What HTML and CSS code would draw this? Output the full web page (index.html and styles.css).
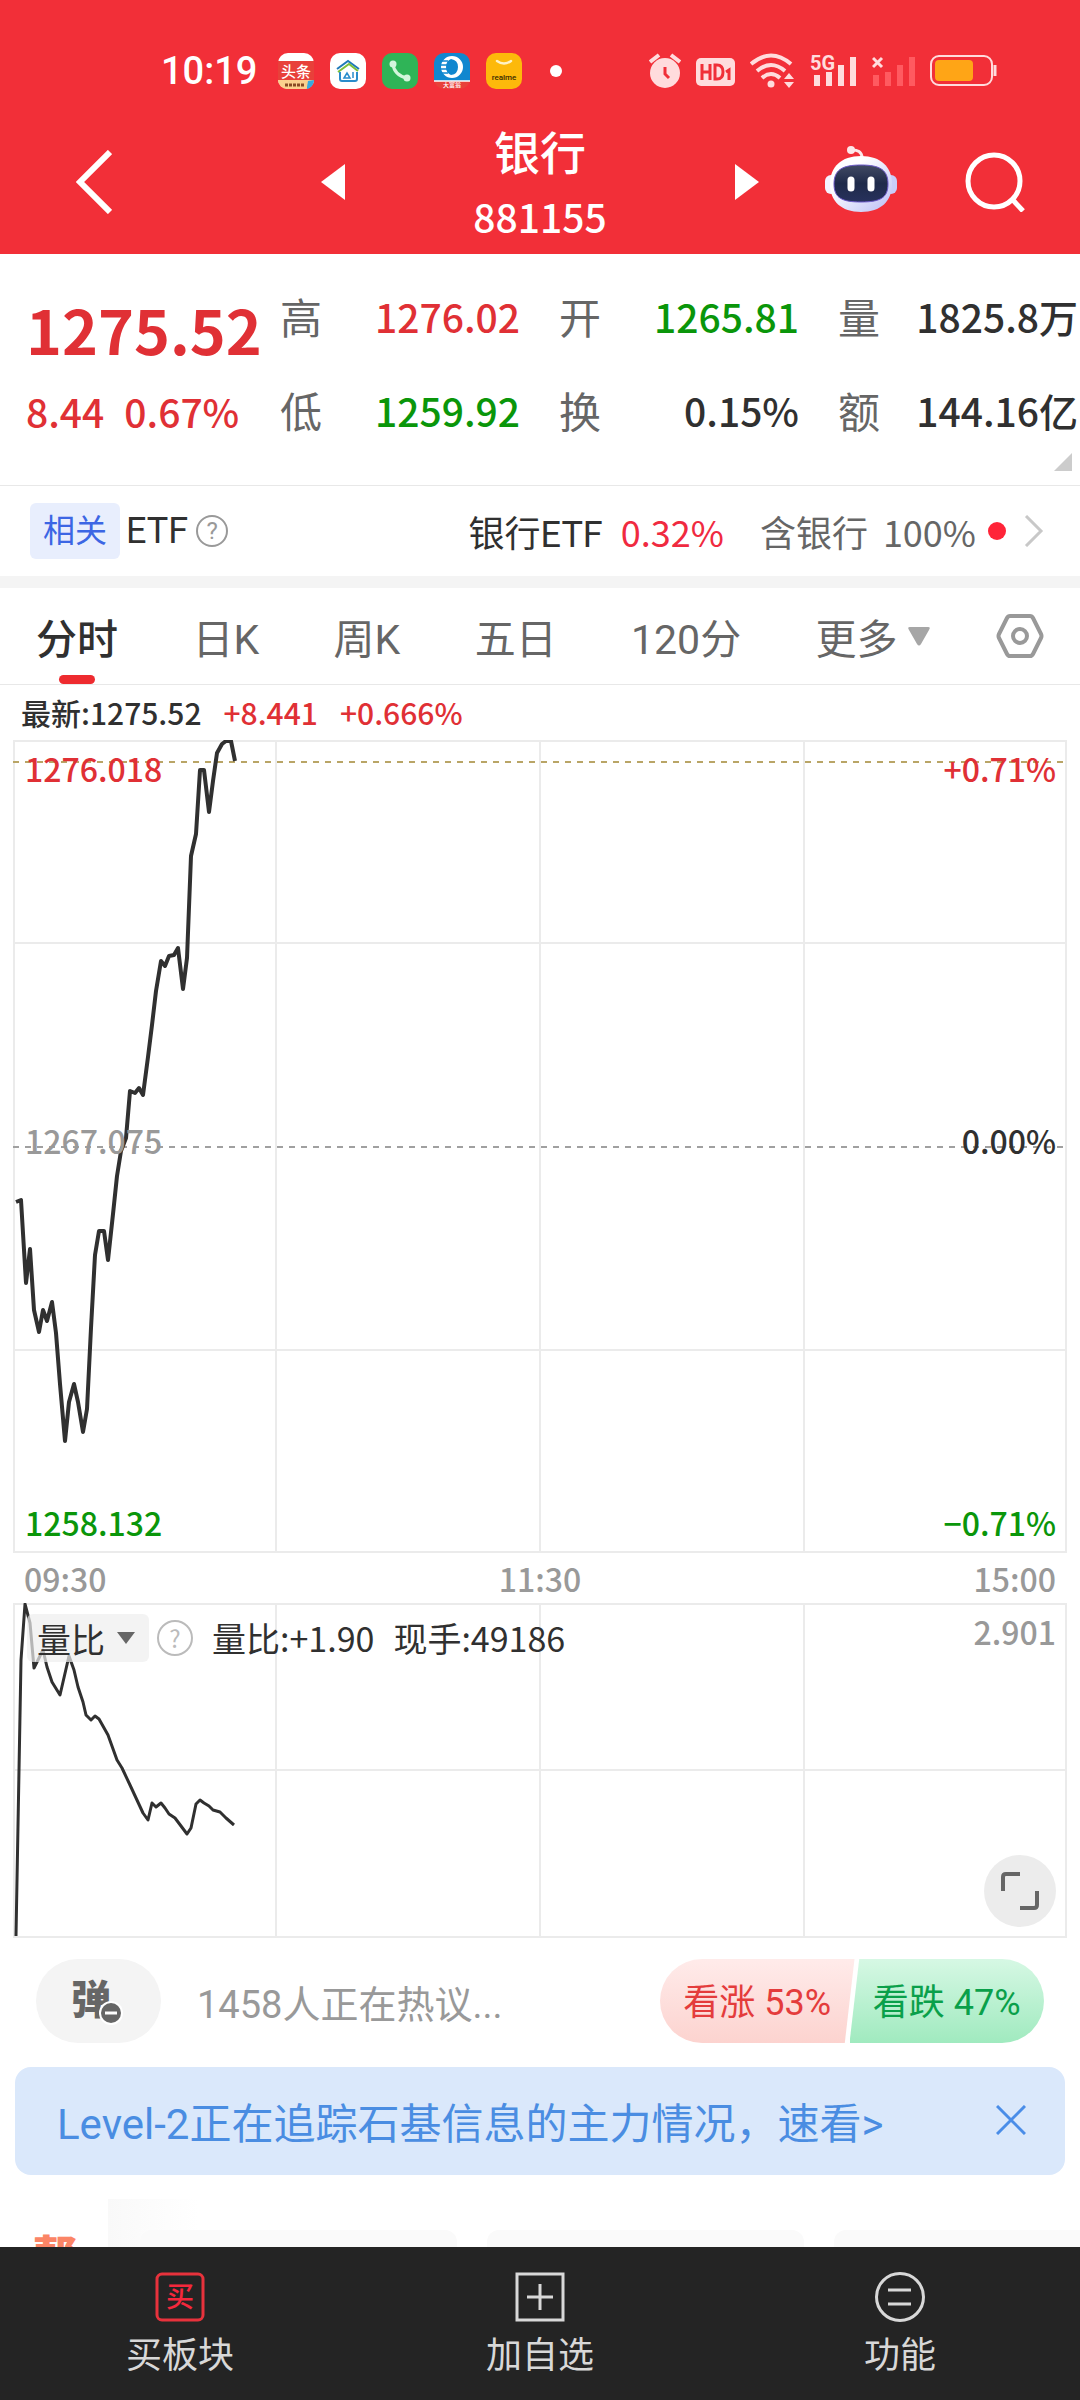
FILE: index.html
```html
<!DOCTYPE html>
<html lang="zh-CN">
<head>
    <meta charset="UTF-8">
    <meta name="viewport" content="width=device-width, initial-scale=1.0">
    <title>银行 881155</title>
    <link rel="stylesheet" href="styles.css">
</head>
<body>

<header class="header">
    <!-- Статус-бар -->
    <div class="status-bar">
        <div class="status-left">
            <span class="clock">10:19</span>
            <svg class="app-icon" viewBox="0 0 36 36">
                <rect width="36" height="36" rx="10" fill="#fff"/>
                <path d="M0 8h36v19H0z" fill="#e8403a"/>
                <path d="M0 27h36a9 9 0 0 1-9 9H9a9 9 0 0 1-9-9z" fill="#fbd08d"/>
                <path d="M29 34l1-6 6-1a9 9 0 0 1-7 9z" fill="#38a9e0"/>
                <text x="18" y="24" class="icon-text" font-size="15" fill="#fff">头条</text>
                <path d="M7 32h20" stroke="#8a4a24" stroke-width="3" stroke-dasharray="3 1"/>
            </svg>
            <svg class="app-icon" viewBox="0 0 36 36">
                <rect width="36" height="36" rx="10" fill="#fff"/>
                <path d="M7 16L18 8l11 8" fill="none" stroke="#1f79b8" stroke-width="2"/>
                <path d="M8 19l11-8 9 7" fill="none" stroke="#7cbf3a" stroke-width="2"/>
                <path d="M10 19v7q0 2 2 2h13q2 0 2-2v-7" fill="none" stroke="#2a8ccb" stroke-width="2"/>
                <path d="M14 25l3-5 3 5zM23 19v6" fill="none" stroke="#2a8ccb" stroke-width="1.5"/>
            </svg>
            <svg class="app-icon" viewBox="0 0 36 36">
                <rect width="36" height="36" rx="10" fill="#2fb457"/>
                <path d="M11 11q1 11 14 14" fill="none" stroke="#d3f5dc" stroke-width="3"/>
                <circle cx="11" cy="11" r="3.5" fill="#d3f5dc"/>
                <circle cx="25" cy="25" r="3.5" fill="#d3f5dc"/>
            </svg>
            <svg class="app-icon" viewBox="0 0 36 36">
                <rect width="36" height="36" rx="10" fill="#e8403a"/>
                <path d="M0 28V10A10 10 0 0 1 10 0h16a10 10 0 0 1 10 10v18z" fill="#1087cf"/>
                <path d="M0 28h36" stroke="#fff" stroke-width="1.5"/>
                <path fill-rule="evenodd" d="M18 3a11 11 0 1 1 0 22a11 11 0 1 1 0-22zM17 6q-5 2-5 8t5 8q7-1 7-8t-7-8z" fill="#fff"/>
                <path d="M4 8h10M4 12h9M4 16h9M4 20h10" stroke="#1087cf" stroke-width="1.5"/>
                <text x="18" y="34" class="icon-text" font-size="6" fill="#fff">大富翁</text>
            </svg>
            <svg class="app-icon" viewBox="0 0 36 36">
                <rect width="36" height="36" rx="10" fill="#fdb90b"/>
                <path d="M11 8q7 5 14 0" fill="none" stroke="#fff2c4" stroke-width="2.5" stroke-linecap="round"/>
                <text x="18" y="27" class="icon-text" font-size="8" fill="#3a2c00">realme</text>
            </svg>
            <span class="more-dot"></span>
        </div>
        <div class="status-right">
            <svg width="32" height="36" viewBox="0 0 32 36">
                <circle cx="16" cy="20" r="15" fill="#ffdcdd"/>
                <path d="M1 9l9-7M31 9l-9-7" stroke="#ffdcdd" stroke-width="4"/>
                <path d="M16 14v7l4 4" fill="none" stroke="#f02f38" stroke-width="3"/>
            </svg>
            <svg width="39" height="36" viewBox="0 0 39 36">
                <rect y="5" width="39" height="28" rx="5" fill="#ffdcdd"/>
                <path d="M6 11v16M14 11v16M6 19h8M19 12v14h2q6 0 6-7t-6-7zM30 19l3-2v10" fill="none" stroke="#f02f38" stroke-width="3"/>
            </svg>
            <svg width="45" height="36" viewBox="0 0 45 36">
                <path d="M1 11q20-17 40 0M7 18q14-12 28 0M12 25q9-8 18 0" fill="none" stroke="#ffdcdd" stroke-width="4"/>
                <circle cx="21" cy="31" r="3.5" fill="#ffdcdd"/>
                <path d="M34 26l5-6 5 6zM34 29l5 6 5-6z" fill="#ffdcdd"/>
            </svg>
            <svg class="signal" width="47" height="36" viewBox="0 0 47 36">
                <text x="0" y="17" font-size="20" font-weight="700" fill="#ffdcdd">5G</text>
                <path d="M7 22v11M19 19v14M31 12v21M43 4v29" stroke="#ffdcdd" stroke-width="6"/>
            </svg>
            <svg width="43" height="36" viewBox="0 0 43 36">
                <path d="M1 5l9 9M10 5l-9 9" stroke="#ffdcdd" stroke-width="3"/>
                <path d="M4 22v11M16 19v14M28 12v21M40 4v29" stroke="#ff5a60" stroke-width="6"/>
            </svg>
            <svg width="67" height="36" viewBox="0 0 67 36">
                <rect x="1" y="3" width="61" height="29" rx="8" fill="none" stroke="#ffdcdd" stroke-width="2"/>
                <rect x="5" y="7" width="38" height="21" rx="4" fill="#ffa516"/>
                <path d="M65 12v11" stroke="#ffdcdd" stroke-width="3"/>
            </svg>
        </div>
    </div>

    <!-- Заголовок -->
    <div class="title-bar">
        <button class="icon-btn back" aria-label="返回">
            <svg width="36" height="64" viewBox="0 0 36 64"><path d="M34 2L4 32l30 30" fill="none" stroke="#fff" stroke-width="6"/></svg>
        </button>
        <div class="title-switch">
            <button class="icon-btn" aria-label="上一个">
                <svg width="24" height="36" viewBox="0 0 24 36"><path d="M24 0v36L0 18z" fill="#fff"/></svg>
            </button>
            <div class="title-text">
                <h1>银行</h1>
                <p>881155</p>
            </div>
            <button class="icon-btn" aria-label="下一个">
                <svg width="24" height="36" viewBox="0 0 24 36"><path d="M0 0v36l24-18z" fill="#fff"/></svg>
            </button>
        </div>
        <div class="title-actions">
            <button class="icon-btn" aria-label="助手">
                <svg width="72" height="72" viewBox="0 0 72 72">
                    <defs>
                        <linearGradient id="shell" x1="0" y1="0" x2="1" y2="1">
                            <stop offset="0.3" stop-color="#fff"/>
                            <stop offset="1" stop-color="#b9bdf5"/>
                        </linearGradient>
                        <linearGradient id="visor" x1="0" y1="0" x2="0" y2="1">
                            <stop offset="0" stop-color="#414a63"/>
                            <stop offset="0.5" stop-color="#1f2a4a"/>
                            <stop offset="1" stop-color="#27315c"/>
                        </linearGradient>
                    </defs>
                    <path d="M25 4q12-1 12 8" fill="none" stroke="#fde8ea" stroke-width="3"/>
                    <circle cx="26" cy="4" r="4" fill="#fde8ea"/>
                    <rect x="0" y="29" width="12" height="19" rx="6" fill="#f4f3ff"/>
                    <rect x="60" y="29" width="12" height="19" rx="6" fill="#c9cdfa"/>
                    <path d="M36 10c20 0 31 11 31 28S56 66 36 66 5 55 5 38s11-28 31-28z" fill="url(#shell)"/>
                    <path d="M36 19c19 0 27 5 27 19s-8 18-27 18S9 52 9 38s8-19 27-19z" fill="url(#visor)" stroke="#6b58c8" stroke-width="1"/>
                    <path d="M26 34v8M46 34v8" stroke="#fff" stroke-width="7" stroke-linecap="round"/>
                </svg>
            </button>
            <button class="icon-btn" aria-label="搜索">
                <svg width="60" height="60" viewBox="0 0 60 60">
                    <circle cx="29" cy="29" r="26" fill="none" stroke="#fff" stroke-width="5"/>
                    <path d="M47 47l11 12" stroke="#fff" stroke-width="5"/>
                </svg>
            </button>
        </div>
    </div>
</header>

<main class="content">
    <!-- Котировка -->
    <section class="quote">
        <div class="quote-main up">
            <div class="price">1275.52</div>
            <div class="change"><span>8.44</span><span>0.67%</span></div>
        </div>
        <div class="quote-stats">
            <div class="stat"><span class="label">高</span><span class="up">1276.02</span></div>
            <div class="stat"><span class="label">开</span><span class="down">1265.81</span></div>
            <div class="stat"><span class="label">量</span><span>1825.8万</span></div>
            <div class="stat"><span class="label">低</span><span class="down">1259.92</span></div>
            <div class="stat"><span class="label">换</span><span>0.15%</span></div>
            <div class="stat"><span class="label">额</span><span>144.16亿</span></div>
        </div>
        <span class="quote-more"></span>
    </section>

    <!-- ETF -->
    <section class="etf">
        <span class="tag">相关</span>
        <span>ETF</span>
        <span class="help">?</span>
        <a href="#" class="etf-link">
            <span>银行ETF</span>
            <span class="etf-rate">0.32%</span>
            <span class="etf-part">含银行</span>
            <span class="etf-share">100%</span>
            <span class="etf-dot"></span>
            <svg width="20" height="32" viewBox="0 0 20 32"><path d="M2 1l15 15L2 31" fill="none" stroke="#c8c8c8" stroke-width="3"/></svg>
        </a>
    </section>

    <!-- Вкладки -->
    <nav class="tabs">
        <button class="tab active">分时</button>
        <button class="tab">日K</button>
        <button class="tab">周K</button>
        <button class="tab">五日</button>
        <button class="tab">120分</button>
        <button class="tab">更多<svg width="22" height="19" viewBox="0 0 22 19"><path d="M2 0h18q3 0 1 3L13 17q-2 3-4 0L1 3q-2-3 1-3z" fill="#a6a6a6"/></svg></button>
        <button class="tab" aria-label="设置">
            <svg width="48" height="46" viewBox="0 0 48 46">
                <path d="M14 3h20q2 0 3 2l8 16q1 2 0 4l-8 16q-1 2-3 2H14q-2 0-3-2L3 25q-1-2 0-4l8-16q1-2 3-2z" fill="none" stroke="#999" stroke-width="4"/>
                <circle cx="24" cy="23" r="7" fill="none" stroke="#999" stroke-width="4"/>
            </svg>
        </button>
    </nav>

    <!-- Графики -->
    <section class="charts">
        <div class="latest">
            <span>最新:1275.52</span>
            <span class="up">+8.441</span>
            <span class="up">+0.666%</span>
        </div>

        <div class="chart chart-price">
            <svg class="plot" viewBox="0 0 1054 813" preserveAspectRatio="none">
                <path class="grid" d="M1 1h1052v811H1zM263 0v813M527 0v813M791 0v813M0 203h1054M0 610h1054"/>
                <path class="dash dash-now" d="M0 22h1054"/>
                <path class="dash" d="M0 407h1054"/>
                <polyline class="line" points="3,462 8,460 13,543 17,509 21,570 26,592 30,570 34,581 39,562 43,593 47,644 52,701 56,662 61,644 65,662 70,692 74,669 78,588 82,515 86,491 91,491 95,520 100,474 104,436 108,411 113,398 117,351 122,353 126,348 130,355 135,317 139,285 143,251 148,221 152,226 156,216 161,215 165,208 170,249 174,218 178,116 183,94 187,30 191,30 196,72 200,41 204,13 209,4 213,1 218,1 222,21"/>
            </svg>
            <span class="mark mark-top-left up">1276.018</span>
            <span class="mark mark-top-right up">+0.71%</span>
            <span class="mark mark-mid-left muted">1267.075</span>
            <span class="mark mark-mid-right">0.00%</span>
            <span class="mark mark-bottom-left down">1258.132</span>
            <span class="mark mark-bottom-right down">−0.71%</span>
        </div>

        <div class="time-axis"><span>09:30</span><span>11:30</span><span>15:00</span></div>

        <div class="chart chart-volume">
            <svg class="plot" viewBox="0 0 1054 335" preserveAspectRatio="none">
                <path class="grid" d="M1 1h1052v333H1zM263 0v335M527 0v335M791 0v335M0 167h1054"/>
                <polyline class="line line-thin" points="3,333 8,57 12,1 17,20 21,65 30,47 34,64 39,79 47,92 56,53 61,67 65,84 70,99 73,112 78,117 82,113 86,116 95,132 104,157 109,165 117,182 130,210 135,217 139,200 143,204 148,200 152,205 156,211 162,215 174,231 178,225 183,201 187,197 191,200 196,203 200,207 207,209 213,215 221,222"/>
            </svg>
            <div class="indicator">
                <span class="indicator-pick">
                    <select class="indicator-select" aria-label="指标"><option>量比</option></select>
                    <svg class="indicator-arrow" width="18" height="12" viewBox="0 0 18 12"><path d="M0 0h18l-9 12z" fill="#666"/></svg>
                </span>
                <span class="help help-light">?</span>
                <span class="indicator-info">量比:+1.90</span>
                <span class="indicator-info">现手:49186</span>
            </div>
            <span class="mark mark-top-right muted">2.901</span>
            <button class="expand" aria-label="全屏">
                <svg width="38" height="38" viewBox="0 0 38 38"><path d="M2 19V5q0-3 3-3h14M36 19v14q0 3-3 3H19" fill="none" stroke="#666" stroke-width="4"/></svg>
            </button>
        </div>
    </section>

    <!-- Обсуждение -->
    <section class="talk">
        <button class="danmu" aria-label="弹幕">
            <span>弹</span>
            <svg class="danmu-off" width="24" height="24" viewBox="0 0 24 24">
                <circle cx="12" cy="12" r="12" fill="#fff"/>
                <circle cx="12" cy="12" r="10" fill="#666"/>
                <path d="M6 12h12" stroke="#fff" stroke-width="3"/>
            </svg>
        </button>
        <a href="#" class="talk-link">1458人正在热议...</a>
        <div class="vote">
            <button class="vote-up">看涨 53%</button>
            <button class="vote-down">看跌 47%</button>
        </div>
    </section>

    <!-- Баннер -->
    <aside class="banner">
        <a href="#">Level-2正在追踪石基信息的主力情况，速看&gt;</a>
        <button class="icon-btn" aria-label="关闭">
            <svg width="30" height="30" viewBox="0 0 30 30"><path d="M1 1l28 28M29 1L1 29" stroke="#4a8de8" stroke-width="3"/></svg>
        </button>
    </aside>

    <section class="feed">
        <span class="feed-title">帮</span>
        <div class="feed-cards">
            <div class="feed-card"></div>
            <div class="feed-card"></div>
            <div class="feed-card"></div>
        </div>
    </section>
</main>

<!-- Нижнее меню -->
<nav class="bottom-nav">
    <a href="#">
        <svg width="50" height="50" viewBox="0 0 50 50">
            <rect x="2" y="2" width="46" height="46" rx="5" fill="none" stroke="#e8323c" stroke-width="3"/>
            <text x="25" y="35" class="icon-text" font-size="28" fill="#f5283c">买</text>
        </svg>
        <span>买板块</span>
    </a>
    <a href="#">
        <svg width="50" height="50" viewBox="0 0 50 50">
            <path d="M2 2h46v46H2zM12 25h26M25 12v26" fill="none" stroke="#d8d8d8" stroke-width="3"/>
        </svg>
        <span>加自选</span>
    </a>
    <a href="#">
        <svg width="50" height="50" viewBox="0 0 50 50">
            <circle cx="25" cy="25" r="23.5" fill="none" stroke="#d8d8d8" stroke-width="3"/>
            <path d="M13 18h23M13 32h23" stroke="#d8d8d8" stroke-width="3"/>
        </svg>
        <span>功能</span>
    </a>
</nav>

</body>
</html>
```
FILE: styles.css
```css
/* Общие стили */
* {
    margin: 0;
    padding: 0;
    box-sizing: border-box;
}

:root {
    --num: "Noto Sans CJK SC", sans-serif;
    --text: Roboto, "Noto Sans CJK SC", sans-serif;
    --up: #e03035;
    --down: #0a960a;
    --line: #e8e8e8;
}

body {
    display: flex;
    flex-direction: column;
    height: 100vh;
    font-family: var(--text);
    font-size: 36px;
    color: #303030;
    background: #fff;
    overflow: hidden;
}

a {
    color: inherit;
    text-decoration: none;
}

button,
select {
    font: inherit;
    color: inherit;
    background: none;
    border: none;
    cursor: pointer;
}

svg {
    display: block;
    flex: none;
}

.up {
    color: var(--up);
}

.down {
    color: var(--down);
}

.muted {
    color: #999;
}

.icon-text {
    text-anchor: middle;
    font-weight: 500;
}

.icon-btn {
    display: flex;
    align-items: center;
}

/* Шапка */
.header {
    flex: none;
    padding-top: 53px;
    background: #f22f38;
    color: #fff;
}

.status-bar {
    display: flex;
    justify-content: space-between;
    align-items: center;
    height: 36px;
    padding: 0 83px 0 161px;
}

.status-left {
    display: flex;
    align-items: center;
    gap: 16px;
}

.clock {
    margin-right: 5px;
    font-size: 38px;
    font-weight: 500;
}

.app-icon {
    width: 36px;
    height: 36px;
}

.more-dot {
    width: 12px;
    height: 12px;
    margin-left: 12px;
    border-radius: 50%;
    background: #fff;
}

.status-right {
    display: flex;
    gap: 15px;
}

.signal {
    overflow: visible;
}

.title-bar {
    display: grid;
    grid-template-columns: 1fr 438px 1fr;
    align-items: center;
    height: 165px;
    padding-top: 20px;
}

.back {
    padding-left: 76px;
}

.title-switch {
    display: flex;
    justify-content: space-between;
    align-items: center;
}

.title-text {
    padding-top: 8px;
    text-align: center;
}

.title-text h1 {
    font-size: 46px;
    font-weight: 500;
    line-height: 60px;
}

.title-text p {
    font-family: var(--num);
    font-size: 39px;
    font-weight: 500;
    line-height: 64px;
}

.title-actions {
    display: flex;
    justify-content: flex-end;
    align-items: center;
    gap: 68px;
    padding-right: 55px;
}

/* Котировка */
.quote {
    position: relative;
    display: flex;
    padding: 32px 2px 44px 0;
    border-bottom: 1px solid var(--line);
    font-family: var(--num);
    font-size: 39px;
    font-weight: 500;
}

.quote-main {
    flex: none;
    width: 280px;
    padding: 7px 0 0 26px;
    white-space: nowrap;
}

.price {
    font-size: 61px;
    font-weight: 700;
    line-height: 72px;
}

.change {
    display: flex;
    gap: 20px;
    margin-top: 16px;
    line-height: 60px;
}

.quote-stats {
    flex: 1;
    display: grid;
    grid-template-columns: repeat(3, 1fr);
    column-gap: 39px;
    row-gap: 33px;
}

.stat {
    display: flex;
    justify-content: space-between;
    line-height: 60px;
    white-space: nowrap;
}

.label {
    font-size: 42px;
    font-weight: 400;
    color: #666;
}

.quote-more {
    position: absolute;
    right: 8px;
    bottom: 14px;
    border-left: 18px solid transparent;
    border-bottom: 18px solid #ccc;
}

/* ETF */
.etf {
    display: flex;
    align-items: center;
    height: 102px;
    padding: 0 36px 0 30px;
    border-bottom: 12px solid #f4f4f4;
}

.tag {
    margin-right: 6px;
    padding: 0 13px;
    border-radius: 6px;
    background: #e8eefd;
    color: #3c66e4;
    font-size: 32px;
    line-height: 56px;
}

.help {
    width: 32px;
    height: 32px;
    margin-left: 8px;
    border: 2px solid #999;
    border-radius: 50%;
    color: #999;
    font-size: 24px;
    line-height: 28px;
    text-align: center;
}

.etf-link {
    display: flex;
    align-items: center;
    margin-left: auto;
}

.etf-rate {
    margin-left: 18px;
    color: #f02a40;
    font-family: var(--num);
}

.etf-part {
    margin-left: 36px;
    color: #666;
}

.etf-share {
    margin-left: 15px;
    color: #666;
    font-family: var(--num);
}

.etf-dot {
    width: 18px;
    height: 18px;
    margin: 0 18px 0 12px;
    border-radius: 50%;
    background: #ff2438;
}

/* Вкладки */
.tabs {
    display: flex;
    justify-content: space-between;
    height: 97px;
    padding: 0 36px;
    border-bottom: 1px solid var(--line);
}

.tab {
    position: relative;
    display: flex;
    align-items: center;
    gap: 10px;
    color: #666;
    font-size: 41px;
}

.tab:last-child {
    margin-left: -8px;
}

.tab.active {
    color: #303030;
    font-weight: 500;
}

.tab.active::after {
    content: "";
    position: absolute;
    bottom: 0;
    left: 50%;
    width: 36px;
    height: 9px;
    margin-left: -18px;
    border-radius: 5px;
    background: #ee2b2f;
}

/* Графики */
.charts {
    padding: 0 13px;
}

.latest {
    display: flex;
    gap: 22px;
    padding-left: 8px;
    font-family: var(--num);
    font-size: 30px;
    font-weight: 500;
    line-height: 55px;
}

.chart {
    position: relative;
}

.chart-price {
    height: 813px;
}

.chart-volume {
    height: 335px;
}

.plot {
    width: 100%;
    height: 100%;
}

.grid {
    fill: none;
    stroke: #ebebeb;
    stroke-width: 2;
}

.dash {
    stroke: #a0a0a0;
    stroke-width: 2;
    stroke-dasharray: 6 6;
}

.dash-now {
    stroke: #b9a566;
}

.line {
    fill: none;
    stroke: #303030;
    stroke-width: 4;
    stroke-linejoin: round;
}

.line-thin {
    stroke-width: 3;
}

.mark {
    position: absolute;
    font-family: var(--num);
    font-size: 32px;
    font-weight: 500;
    line-height: 32px;
}

.mark-top-left,
.mark-mid-left,
.mark-bottom-left {
    left: 12px;
}

.mark-top-right,
.mark-mid-right,
.mark-bottom-right {
    right: 11px;
}

.mark-top-left,
.mark-top-right {
    top: 12px;
}

.mark-mid-left,
.mark-mid-right {
    top: 384px;
}

.mark-bottom-left,
.mark-bottom-right {
    bottom: 15px;
}

.time-axis {
    display: flex;
    justify-content: space-between;
    padding: 0 11px;
    color: #999;
    font-family: var(--num);
    font-size: 32px;
    font-weight: 500;
    line-height: 50px;
}

.indicator {
    position: absolute;
    top: 10px;
    left: 14px;
    display: flex;
    align-items: center;
    font-family: var(--num);
    font-size: 34px;
}

.indicator-pick {
    position: relative;
}

.indicator-select {
    display: block;
    width: 122px;
    height: 48px;
    padding-left: 10px;
    border-radius: 6px;
    background: rgba(238, 238, 238, 0.7);
    appearance: none;
}

.indicator-arrow {
    position: absolute;
    top: 18px;
    right: 14px;
    pointer-events: none;
}

.help-light {
    width: 36px;
    height: 36px;
    border-color: #bbb;
    color: #bbb;
    line-height: 32px;
}

.indicator-info {
    margin-left: 19px;
}

.expand {
    position: absolute;
    right: 11px;
    bottom: 11px;
    display: flex;
    align-items: center;
    justify-content: center;
    width: 72px;
    height: 72px;
    border-radius: 50%;
    background: #ececec;
}

/* Обсуждение */
.talk {
    display: flex;
    align-items: center;
    padding: 21px 36px 24px;
}

.danmu {
    position: relative;
    width: 125px;
    height: 84px;
    padding: 0 15px 8px 0;
    border-radius: 42px;
    background: #f4f4f4;
    color: #666;
    font-size: 40px;
    font-weight: 900;
}

.danmu-off {
    position: absolute;
    right: 38px;
    bottom: 18px;
}

.talk-link {
    margin-left: 36px;
    color: #999;
    font-size: 38px;
}

.vote {
    display: flex;
    width: 384px;
    height: 84px;
    margin-left: auto;
    border-radius: 42px;
    overflow: hidden;
}

.vote-up,
.vote-down {
    flex: 1;
    padding-bottom: 4px;
}

.vote-up {
    background: linear-gradient(#ffebea, #fcd3cf);
    color: #e43c3c;
    clip-path: polygon(0 0, 100% 0, 95% 100%, 0 100%);
}

.vote-down {
    margin-left: -5px;
    background: linear-gradient(#d6f8e4, #a0eabf);
    color: #0aa04a;
    clip-path: polygon(5% 0, 100% 0, 100% 100%, 0 100%);
}

/* Баннер */
.banner {
    display: flex;
    justify-content: space-between;
    align-items: center;
    height: 108px;
    margin: 0 15px;
    padding: 0 39px 2px 42px;
    border-radius: 16px;
    background: #dae8fb;
    color: #4a8de2;
    font-size: 42px;
}

/* Лента */
.feed {
    display: flex;
    padding: 24px 0 0 33px;
}

.feed-title {
    flex: none;
    width: 75px;
    padding-top: 31px;
    color: #fb8566;
    font-size: 44px;
    font-weight: 900;
    line-height: 56px;
}

.feed-cards {
    flex: 1;
    display: flex;
    gap: 30px;
    min-width: 0;
    padding: 31px 0 0 32px;
    background: linear-gradient(90deg, #f9f9f9, #fff 90px);
}

.feed-card {
    flex: 0 0 317px;
    height: 120px;
    border-radius: 12px;
    background: #fafafa;
}

/* Нижнее меню */
.bottom-nav {
    flex: none;
    display: flex;
    height: 153px;
    background: #242424;
    color: #d8d8d8;
}

.bottom-nav a {
    flex: 1;
    display: flex;
    flex-direction: column;
    align-items: center;
    gap: 4px;
    padding-top: 25px;
}

.content {
    flex: 1;
    min-height: 0;
    overflow: hidden;
}
```
